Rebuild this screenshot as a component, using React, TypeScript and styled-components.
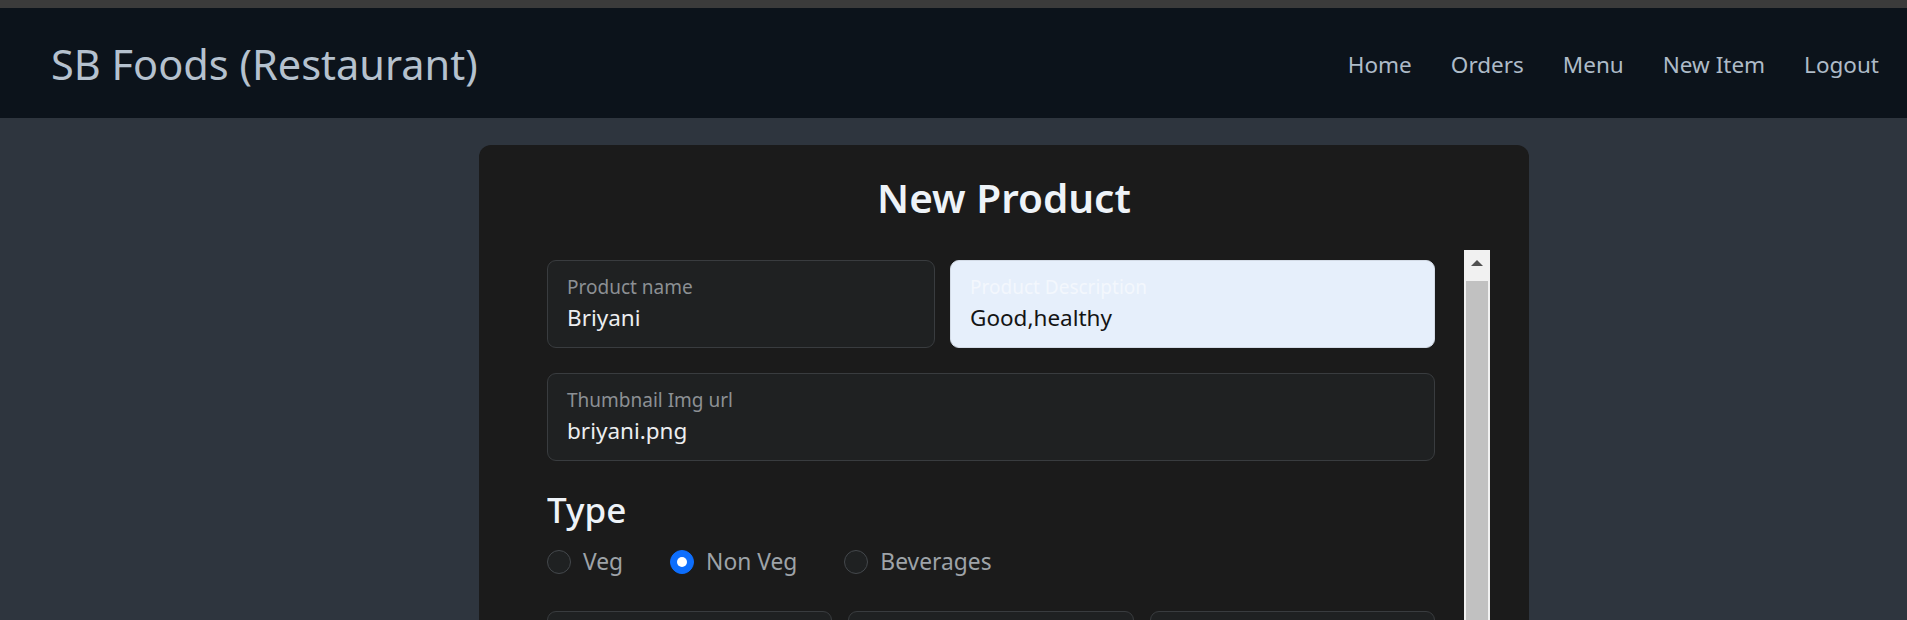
import React from "react";
import styled, { createGlobalStyle } from "styled-components";

const GlobalStyle = createGlobalStyle`
  html, body {
    margin: 0;
    padding: 0;
    height: 100%;
    overflow: hidden;
    background: #2e353e;
  }
  body {
    font-family: "Noto Sans", "Open Sans", sans-serif;
  }
  *, *::before, *::after { box-sizing: border-box; }
`;

const Page = styled.div`
  height: 620px;
  overflow: hidden;
  display: flex;
  flex-direction: column;
  background: #2e353e;
`;

const TopStrip = styled.div`
  height: 8px;
  flex-shrink: 0;
  background: #3b3b3b;
`;

const NavBar = styled.nav`
  height: 110px;
  flex-shrink: 0;
  display: flex;
  align-items: center;
  justify-content: space-between;
  padding: 3px 28px 0 51px;
  background: #0c131b;
`;

const Brand = styled.a`
  font-size: 41.5px;
  font-weight: 400;
  color: #b5c1ce;
  text-decoration: none;
  line-height: 1.2;
`;

const NavList = styled.ul`
  display: flex;
  gap: 39px;
  list-style: none;
  margin: 0;
  padding: 0;
`;

const NavLink = styled.a`
  font-size: 22.5px;
  color: #aebbc8;
  text-decoration: none;
  line-height: 1.5;
`;

const Main = styled.main`
  flex: 1;
  min-height: 0;
  display: flex;
  justify-content: flex-start;
  padding: 27px 0 0 479px;
`;

const Card = styled.section`
  width: 1050px;
  height: 720px;
  flex-shrink: 0;
  display: flex;
  flex-direction: column;
  background: #1b1b1b;
  border-radius: 12px;
`;

const Title = styled.h2`
  margin: 29px 0 28px;
  text-align: center;
  font-size: 40.5px;
  font-weight: 600;
  line-height: 48px;
  color: #eef3f8;
`;

const FormArea = styled.div`
  height: 560px;
  margin: 0 39px 0 68px;
  display: flex;
`;

const FormViewport = styled.div`
  flex: 1;
  min-width: 0;
  overflow: hidden;
  padding: 10px 29px 20px 0;
`;

const Scrollbar = styled.div`
  width: 26px;
  flex-shrink: 0;
  display: flex;
  flex-direction: column;
  background: #f1f1f1;
`;

const ScrollButton = styled.div`
  height: 31px;
  flex-shrink: 0;
  display: flex;
  justify-content: center;
  padding-top: 10px;
  background: #f1f1f1;
`;

const ScrollThumb = styled.div`
  flex: 1;
  margin: 0 2px 60px;
  background: #c1c1c1;
`;

const Form = styled.form`
  display: flex;
  flex-direction: column;
`;

const Row = styled.div<{ $cols: string; $gap?: number; $mb?: number }>`
  display: grid;
  grid-template-columns: ${(p) => p.$cols};
  gap: ${(p) => p.$gap ?? 15}px;
  margin-bottom: ${(p) => p.$mb ?? 25}px;
`;

const Field = styled.label<{ $filled?: boolean }>`
  display: flex;
  flex-direction: column;
  height: 88px;
  padding: 16.7px 19px 0;
  border: 1px solid ${(p) => (p.$filled ? "#d3dbe6" : "#393c3f")};
  border-radius: 9px;
  background: ${(p) => (p.$filled ? "#e6effb" : "#1f2122")};
`;

const FieldLabel = styled.span<{ $filled?: boolean }>`
  display: block;
  font-size: 19px;
  line-height: 19px;
  color: ${(p) => (p.$filled ? "#f3f7fd" : "#8c9094")};
  white-space: nowrap;
`;

const FieldInput = styled.input<{ $filled?: boolean }>`
  margin-top: 5.5px;
  height: 30px;
  padding: 0;
  border: none;
  outline: none;
  background: transparent;
  font-family: inherit;
  font-size: 22.5px;
  color: ${(p) => (p.$filled ? "#141414" : "#eceef0")};
  width: 100%;
`;

const SectionHeading = styled.h3`
  margin: 29px 0 0;
  font-size: 35px;
  font-weight: 500;
  line-height: 40.8px;
  color: #eef3f8;
`;

const RadioGroup = styled.div`
  display: flex;
  align-items: center;
  gap: 47px;
  margin: 19.5px 0 37px;
`;

const RadioItem = styled.label`
  display: flex;
  align-items: center;
  gap: 12px;
  height: 24px;
  font-size: 22.8px;
  line-height: 24px;
  color: #9ea3a8;
`;

const RadioCircle = styled.span<{ $checked?: boolean }>`
  width: 24px;
  height: 24px;
  border-radius: 50%;
  flex-shrink: 0;
  display: flex;
  align-items: center;
  justify-content: center;
  border: 1px solid ${(p) => (p.$checked ? "#0d6efd" : "#44484c")};
  background: ${(p) => (p.$checked ? "#0d6efd" : "#1f2122")};

  &::after {
    content: "";
    width: 10px;
    height: 10px;
    border-radius: 50%;
    background: #fff;
    display: ${(p) => (p.$checked ? "block" : "none")};
  }
`;

const SubmitButton = styled.button`
  align-self: center;
  height: 58px;
  padding: 0 36px;
  border: none;
  border-radius: 9px;
  background: #0d6efd;
  color: #fff;
  font-family: inherit;
  font-size: 22px;
`;

type FieldProps = { label: string; value: string; filled?: boolean };

const FloatingField = ({ label, value, filled }: FieldProps) => (
  <Field $filled={filled}>
    <FieldLabel $filled={filled}>{label}</FieldLabel>
    <FieldInput $filled={filled} value={value} readOnly />
  </Field>
);

const ArrowUp = () => (
  <svg width="12" height="6" viewBox="0 0 12 6">
    <polygon points="0,6 6,0 12,6" fill="#505050" />
  </svg>
);

const links = ["Home", "Orders", "Menu", "New Item", "Logout"];
const types = [
  { name: "Veg", checked: false },
  { name: "Non Veg", checked: true },
  { name: "Beverages", checked: false },
];

export default function App() {
  return (
    <>
      <GlobalStyle />
      <Page>
        <TopStrip />
        <NavBar>
          <Brand>SB Foods (Restaurant)</Brand>
          <NavList>
            {links.map((l) => (
              <li key={l}>
                <NavLink>{l}</NavLink>
              </li>
            ))}
          </NavList>
        </NavBar>
        <Main>
          <Card>
            <Title>New Product</Title>
            <FormArea>
              <FormViewport>
                <Form>
                  <Row $cols="388px 1fr">
                    <FloatingField label="Product name" value="Briyani" />
                    <FloatingField label="Product Description" value="Good,healthy" filled />
                  </Row>
                  <Row $cols="1fr" $mb={0}>
                    <FloatingField label="Thumbnail Img url" value="briyani.png" />
                  </Row>
                  <SectionHeading>Type</SectionHeading>
                  <RadioGroup>
                    {types.map((t) => (
                      <RadioItem key={t.name}>
                        <RadioCircle $checked={t.checked} />
                        {t.name}
                      </RadioItem>
                    ))}
                  </RadioGroup>
                  <Row $cols="1fr 1fr 1fr" $gap={16}>
                    <FloatingField label="Category" value="Biryani" />
                    <FloatingField label="Price" value="250" />
                    <FloatingField label="Discount" value="10" />
                  </Row>
                  <SubmitButton type="button">Add product</SubmitButton>
                </Form>
              </FormViewport>
              <Scrollbar aria-hidden="true">
                <ScrollButton>
                  <ArrowUp />
                </ScrollButton>
                <ScrollThumb />
              </Scrollbar>
            </FormArea>
          </Card>
        </Main>
      </Page>
    </>
  );
}
